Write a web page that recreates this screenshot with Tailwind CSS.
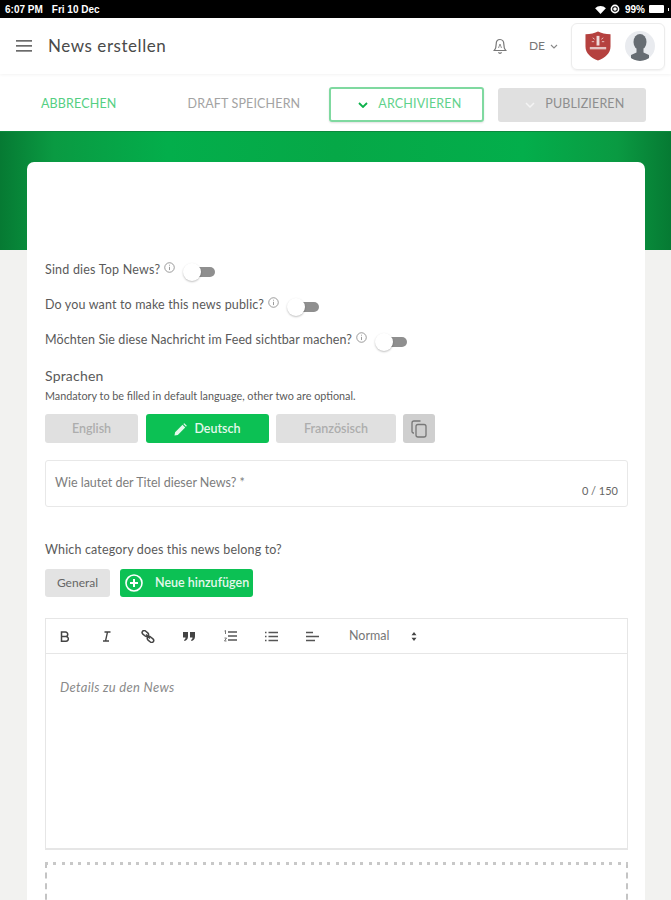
<!DOCTYPE html>
<html lang="de">
<head>
  <meta charset="UTF-8" />
  <meta name="viewport" content="width=device-width, initial-scale=1.0"/>
  <title>News erstellen</title>
  <script src="https://cdn.jsdelivr.net/npm/@tailwindcss/browser@4"></script>
</head>
<body class="bg-[#f2f2f0] h-[900px] overflow-hidden font-['Lato','Open_Sans',sans-serif] text-[#5a5a5a]">
  <!-- status bar -->
  <div class="h-[18px] bg-black text-white flex items-center justify-between pl-[5px] pr-[2px] text-[10px] font-bold font-['Liberation_Sans',sans-serif]">
    <div class="flex gap-[9px]"><span>6:07 PM</span><span>Fri 10 Dec</span></div>
    <div class="flex items-center gap-[4px]">
      <svg class="w-[11px] h-[9px]" viewBox="0 0 12 10" fill="#fff"><path d="M0 3.500a8.500 8.500 0 0 1 12 0L6 10z"/></svg>
      <svg class="w-[10px] h-[10px]" viewBox="0 0 10 10" fill="none" stroke="#fff" stroke-width="1.600"><circle cx="5" cy="5" r="3.600"/><circle cx="5" cy="5" r="1" fill="#fff"/></svg>
      <span class="ml-[1px]">99%</span>
      <div class="w-[15px] h-[8px] bg-white rounded-[1px]"></div>
      <div class="w-[1px] h-[3px] bg-white"></div>
    </div>
  </div>

  <!-- header -->
  <header class="h-[56px] bg-white flex items-center pl-[16px] pr-[6px] shadow-[0_1px_3px_rgba(0,0,0,0.05)] relative">
    <svg class="w-[16px] h-[12px]" viewBox="0 0 16 12" fill="#6b6b6b"><rect y="0" width="16" height="1.700"/><rect y="5" width="16" height="1.700"/><rect y="10" width="16" height="1.700"/></svg>
    <h1 class="ml-[16px] text-[17px] tracking-[0.55px] text-[#4a4a4a]">News erstellen</h1>
    <div class="ml-auto flex items-center">
      <svg class="w-[14px] h-[17px]" viewBox="0 0 14 17" fill="none" stroke="#777" stroke-width="1.200"><path d="M7 1.500c-2.600 0-3.800 2-3.800 4.500 0 3.200-.6 5-1.900 6.500h11.400c-1.300-1.500-1.900-3.300-1.900-6.500 0-2.500-1.200-4.500-3.800-4.500z"/><path d="M5.500 14.300a1.600 1.600 0 0 0 3 0"/><path d="M5.500 10l1.500-4 1.500 4" stroke-width="0.800"/></svg>
      <span class="ml-[22px] text-[12px] text-[#777]">DE</span>
      <svg class="ml-[5px] w-[8px] h-[5px]" viewBox="0 0 8 5" fill="none" stroke="#888" stroke-width="1.100"><path d="M1 1l3 3 3-3"/></svg>
      <div class="ml-[13px] w-[94px] h-[47px] border border-[#ececec] rounded-[6px] flex items-center justify-between pl-[13px] pr-[9px] shadow-[0_1px_2px_rgba(0,0,0,0.06)]">
        <svg class="w-[26px] h-[30px]" viewBox="0 0 27 31"><path d="M13.500 0.500c3 1.700 8 2.600 13 2.800v12.700c0 7-5.700 11.800-13 14.500C6.200 27.800.5 23 .5 16V3.300c5-.2 10-1.100 13-2.800z" fill="#b5413f"/><rect x="12" y="5" width="3" height="10" fill="#efdcdc"/><path d="M8 7l2 1.500M19 7l-2 1.500M7 11h2.500M17.500 11H20" stroke="#e5c3c2"/><rect x="5" y="16.500" width="17" height="2.500" fill="#e5c3c2"/></svg>
        <div class="w-[30px] h-[30px] rounded-full bg-[#e9ebef] overflow-hidden flex justify-center">
          <svg class="w-[30px] h-[30px]" viewBox="0 0 30 30" fill="#676d73"><ellipse cx="15" cy="11" rx="6.500" ry="8"/><path d="M11.500 18h7v3.500l5.500 2.500v4.500a15 15 0 0 1-18 0V24l5.500-2.500z"/></svg>
        </div>
      </div>
    </div>
  </header>

  <!-- action bar -->
  <div class="h-[57px] bg-white flex items-center pt-[4px] text-[12.500px] tracking-[0.15px]">
    <span class="ml-[41px] text-[#54cf82]">ABBRECHEN</span>
    <span class="ml-[71px] text-[#a3a3a3]">DRAFT SPEICHERN</span>
    <button class="ml-[29px] w-[155px] h-[35px] border-2 border-[#7fd9a0] rounded-[3px] flex items-center justify-center gap-[10px] pl-[6px] text-[#5fd28b] shadow-[0_1px_2px_rgba(0,0,0,0.12)]">
      <svg class="w-[10px] h-[6px]" viewBox="0 0 10 6" fill="none" stroke="#0db14b" stroke-width="1.800"><path d="M1 1l4 4 4-4"/></svg>
      ARCHIVIEREN
    </button>
    <button class="ml-[14px] w-[148px] h-[34px] bg-[#e0e0e0] rounded-[3px] flex items-center justify-center gap-[10px] pl-[5px] text-[#8e8e8e]">
      <svg class="w-[10px] h-[6px]" viewBox="0 0 10 6" fill="none" stroke="#f4f4f4" stroke-width="1.500"><path d="M1 1l4 4 4-4"/></svg>
      PUBLIZIEREN
    </button>
  </div>

  <!-- green band -->
  <div class="h-[119px] bg-[linear-gradient(90deg,#067a33_0%,#0a9a42_8%,#03ae4b_25%,#06a847_50%,#03ae4b_78%,#0a9a42_92%,#067a33_100%)] border-t border-[#0b8a3d]"></div>

  <!-- form card -->
  <main class="relative ml-[27px] mr-[26px] -mt-[88px] h-[800px] bg-white rounded-t-[7px] pl-[18px] pr-[17px] pt-[100px]">
    <div class="flex items-center h-[17px] text-[12.500px] tracking-[0.2px]">
      <span>Sind dies Top News?</span>
      <svg class="ml-[4px] -mt-[6px] w-[11px] h-[11px]" viewBox="0 0 12 12" fill="none" stroke="#777" stroke-width="0.800"><circle cx="6" cy="6" r="5.200"/><path d="M6 5.300v3.500M6 3v1"/></svg>
      <div class="relative ml-[13px] mt-[3px] w-[27px] h-[10px] bg-[#8f8f8f] rounded-full">
        <div class="absolute -left-[5px] -top-[4px] w-[18px] h-[18px] rounded-full bg-white shadow-[0_1px_2px_rgba(0,0,0,0.25)]"></div>
      </div>
    </div>
    <div class="flex items-center h-[17px] mt-[18px] text-[12.500px] tracking-[0.15px]">
      <span>Do you want to make this news public?</span>
      <svg class="ml-[4px] -mt-[6px] w-[11px] h-[11px]" viewBox="0 0 12 12" fill="none" stroke="#777" stroke-width="0.800"><circle cx="6" cy="6" r="5.200"/><path d="M6 5.300v3.500M6 3v1"/></svg>
      <div class="relative ml-[13px] mt-[3px] w-[27px] h-[10px] bg-[#8f8f8f] rounded-full">
        <div class="absolute -left-[5px] -top-[4px] w-[18px] h-[18px] rounded-full bg-white shadow-[0_1px_2px_rgba(0,0,0,0.25)]"></div>
      </div>
    </div>
    <div class="flex items-center h-[17px] mt-[18px] text-[12.500px] tracking-[0.1px]">
      <span>Möchten Sie diese Nachricht im Feed sichtbar machen?</span>
      <svg class="ml-[4px] -mt-[6px] w-[11px] h-[11px]" viewBox="0 0 12 12" fill="none" stroke="#777" stroke-width="0.800"><circle cx="6" cy="6" r="5.200"/><path d="M6 5.300v3.500M6 3v1"/></svg>
      <div class="relative ml-[13px] mt-[3px] w-[27px] h-[10px] bg-[#8f8f8f] rounded-full">
        <div class="absolute -left-[5px] -top-[4px] w-[18px] h-[18px] rounded-full bg-white shadow-[0_1px_2px_rgba(0,0,0,0.25)]"></div>
      </div>
    </div>

    <div class="mt-[17px] text-[14px] leading-[20px] tracking-[0.2px]">Sprachen</div>
    <div class="mt-[3px] text-[10.800px] leading-[13px]">Mandatory to be filled in default language, other two are optional.</div>

    <div class="mt-[12px] flex items-center text-[12.500px] font-semibold">
      <div class="w-[93px] h-[29px] bg-[#e0e0e0] rounded-[3px] flex items-center justify-center pt-[1px] text-[#adadad]">English</div>
      <div class="ml-[8px] w-[123px] h-[29px] bg-[#0cc154] rounded-[3px] flex items-center justify-center gap-[7px] pt-[1px] text-[#e5f8ec]">
        <svg class="w-[13px] h-[13px]" viewBox="0 0 13 13" fill="#e5f8ec"><path d="M0.500 12.500l.6-3.300 7.400-7.400 2.700 2.700-7.400 7.400zM9.300 1l1-.8 2.500 2.500-.8 1z"/></svg>
        Deutsch
      </div>
      <div class="ml-[7px] w-[120px] h-[29px] bg-[#e0e0e0] rounded-[3px] flex items-center justify-center pt-[1px] text-[#adadad]">Französisch</div>
      <div class="ml-[7px] w-[32px] h-[29px] bg-[#cfcfcf] rounded-[3px] flex items-center justify-center">
        <svg class="w-[16px] h-[18px]" viewBox="0 0 16 18" fill="none" stroke="#777" stroke-width="1.300"><path d="M3 13H2.500A1.500 1.500 0 0 1 1 11.500V3a2 2 0 0 1 2-2h6.500"/><rect x="5" y="4.500" width="10" height="12.500" rx="2"/></svg>
      </div>
    </div>

    <div class="mt-[17px] h-[47px] border border-[#e8e8e8] rounded-[3px] relative pl-[9px] pt-[14px] text-[12.500px] leading-[16px] text-[#7d7d7d]">
      Wie lautet der Titel dieser News? *
      <span class="absolute right-[9px] bottom-[8px] text-[11px] leading-[14px] text-[#666]">0 / 150</span>
    </div>

    <div class="mt-[34px] text-[12.500px] tracking-[0.15px] leading-[17px]">Which category does this news belong to?</div>
    <div class="mt-[11px] flex items-center text-[12px]">
      <div class="w-[65px] h-[28px] bg-[#e3e3e3] rounded-[3px] flex items-center justify-center text-[#666]">General</div>
      <div class="ml-[10px] w-[133px] h-[28px] bg-[#0cc154] rounded-[3px] flex items-center pl-[5px] text-[#e5f8ec] font-semibold">
        <svg class="w-[18px] h-[18px]" viewBox="0 0 18 18" fill="none" stroke="#fff"><circle cx="9" cy="9" r="8" stroke-width="1.600"/><path d="M9 5v8M5 9h8" stroke-width="2"/></svg>
        <span class="ml-[12px] whitespace-nowrap text-[12.500px]">Neue hinzufügen</span>
      </div>
    </div>

    <!-- rich text editor -->
    <div class="mt-[21px] h-[232px] border-2 border-[#e6e6e6] border-t border-r border-l flex flex-col">
      <div class="h-[35px] flex items-center border-b border-[#e6e6e6] pl-[14px] text-[#555] shrink-0">
        <svg class="w-[10px] h-[11px]" viewBox="0 0 10 11" fill="none" stroke="#444" stroke-width="1.500"><path d="M1.500 1h4a2.200 2.200 0 0 1 0 4.500h-4zM1.500 5.500h4.500a2.300 2.300 0 0 1 0 4.700H1.500z"/></svg>
        <svg class="ml-[32px] w-[9px] h-[11px]" viewBox="0 0 9 11" fill="none" stroke="#444" stroke-width="1.300"><path d="M2.500 1h6M1 10h6M5.500 1l-2 9"/></svg>
        <svg class="ml-[30px] w-[14px] h-[13px]" viewBox="0 0 14 13" fill="none" stroke="#444" stroke-width="1.500"><rect x="0.800" y="1.500" width="7" height="4" rx="2" transform="rotate(40 4.300 3.500)"/><rect x="6" y="7.500" width="7" height="4" rx="2" transform="rotate(40 9.500 9.500)"/><path d="M5 4.500l4 4"/></svg>
        <svg class="ml-[28px] w-[12px] h-[9px]" viewBox="0 0 12 9" fill="#444"><path d="M0 0h5v4.500c0 2.500-1.500 4-3.500 4.500l-.5-1c1-.4 1.500-1.200 1.500-2.500H0zM7 0h5v4.500c0 2.500-1.500 4-3.500 4.500L8 8c1-.4 1.500-1.200 1.500-2.500H7z"/></svg>
        <svg class="ml-[29px] w-[13px] h-[12px]" viewBox="0 0 13 12" fill="none" stroke="#555"><path d="M4 2h9M4 6h9M4 10h9" stroke-width="1.300"/><path d="M0.500 1l1-.5V4M0.500 8h2L.5 11h2" stroke-width="0.800"/></svg>
        <svg class="ml-[28px] w-[13px] h-[11px]" viewBox="0 0 13 11" fill="none" stroke="#555" stroke-width="1.300"><path d="M0 1.500h1.500M0 5.500h1.500M0 9.500h1.500M3.500 1.500H13M3.500 5.500H13M3.500 9.500H13"/></svg>
        <svg class="ml-[28px] w-[13px] h-[11px]" viewBox="0 0 13 11" fill="none" stroke="#555" stroke-width="1.300"><path d="M0 1.500h7M0 5.500h13M0 9.500h9"/></svg>
        <span class="ml-[30px] text-[12.500px] text-[#777]">Normal</span>
        <svg class="ml-[22px] w-[6px] h-[9px]" viewBox="0 0 6 9" fill="#444"><path d="M3 0l2.500 3.300h-5zM3 9L.5 5.700h5z"/></svg>
      </div>
      <div class="pl-[14px] pt-[26px] text-[13px] leading-[15px] tracking-[0.3px] italic text-[#8a8a8a]">Details zu den News</div>
    </div>

    <!-- upload area: dotted top, dashed sides -->
    <div class="mt-[12px] h-[80px] border-x-2 border-dashed border-[#c4c4c4]">
      <div class="-mx-[2px] h-[3px] bg-[repeating-linear-gradient(90deg,#c8c8c8_0_3px,transparent_3px_8.300px)]"></div>
    </div>
  </main>
</body>
</html>
